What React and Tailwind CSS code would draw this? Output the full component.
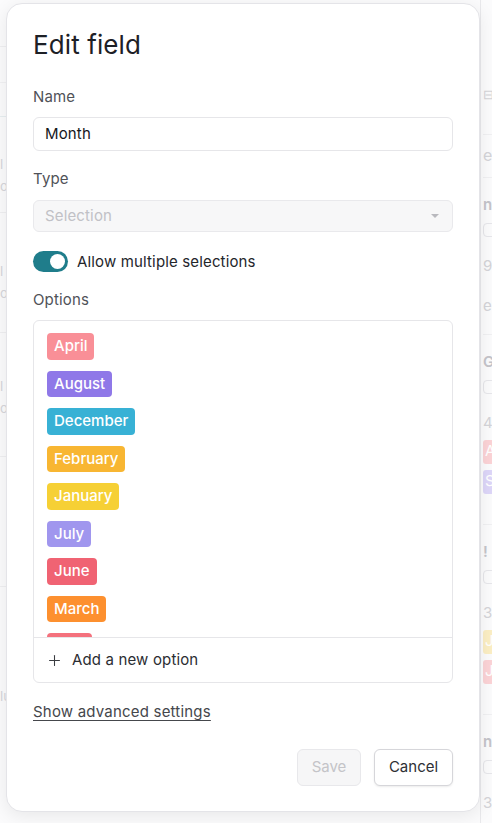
import { Plus } from "lucide-react";

const options = [
  { label: "April", color: "bg-[#f98f97]" },
  { label: "August", color: "bg-[#8f78e8]" },
  { label: "December", color: "bg-[#38b1d5]" },
  { label: "February", color: "bg-[#f8b632]" },
  { label: "January", color: "bg-[#f6d035]" },
  { label: "July", color: "bg-[#a096ee]" },
  { label: "June", color: "bg-[#f06373]" },
  { label: "March", color: "bg-[#fd902f]" },
  { label: "May", color: "bg-[#f4717d]" },
];

const cards = [
  { h: "h-[157px]", title: "nk", rows: ["90", "er"], badges: [] },
  {
    h: "h-[190px]",
    title: "Gro",
    rows: ["4,1"],
    badges: [
      { text: "Ap", cls: "bg-[#fbd3d6]" },
      { text: "Se", cls: "bg-[#ddd6f8]" },
    ],
  },
  {
    h: "h-[190px]",
    title: "! [",
    rows: ["3,5"],
    badges: [
      { text: "Ja", cls: "bg-[#fbeec4]" },
      { text: "Ju", cls: "bg-[#fbd3d6]" },
    ],
  },
  { h: "h-[120px]", title: "n", rows: ["32"], badges: [] },
];

// faded page behind the dialog
const Backdrop = () => (
  <div className="flex h-full w-full bg-[#fbfbfc]">
    <div className="flex w-[6px] flex-col overflow-hidden text-[13px] text-[#d6d6da]">
      <div className="h-[47px] border-b border-[#efeff1]" />
      <div className="h-[36px] border-b border-[#f1f1f3]" />
      <div className="h-[34px] border-b border-[#e7eef0]" />
      <div className="h-[96px] border-b border-[#efeff1] pt-[36px] leading-[22px]">l<br />o</div>
      <div className="h-[120px] border-b border-[#efeff1] pt-[47px] leading-[22px]">l<br />o</div>
      <div className="h-[124px] border-b border-[#efeff1] pt-[42px] leading-[22px]">l<br />o</div>
      <div className="h-[130px] border-b border-[#efeff1]" />
      <div className="pt-[100px]">lu</div>
    </div>
    <div className="ml-auto w-[12px] overflow-hidden border-l border-[#e9e9ec]">
      <div className="w-[200px] pl-[2px] text-[15px] text-[#d4d4d8]">
        <div className="h-[135px] border-b border-[#f0f0f2] pt-[85px] text-[13px]">⊟</div>
        <div className="h-[43px] border-b border-[#f0f0f2] pt-[8px] text-[16px]">e l</div>
        {cards.map((c, i) => (
          <div key={i} className={`${c.h} border-b border-[#f0f0f2] pt-[16px]`}>
            <div className="font-semibold text-[#c4c4ca]">{c.title}</div>
            <div className="mt-[6px] h-[14px] w-[40px] rounded-sm border border-[#e6e6ea]" />
            {c.rows.map((r) => (
              <div key={r} className="mt-[18px]">{r}</div>
            ))}
            {c.badges.map((b) => (
              <div key={b.text} className={`mt-[6px] h-[24px] w-[40px] rounded-[3px] px-[2px] text-white ${b.cls}`}>
                {b.text}
              </div>
            ))}
          </div>
        ))}
      </div>
    </div>
  </div>
);

export default function App() {
  return (
    <div className="relative h-[823px] w-[492px] overflow-hidden font-['Inter','Noto_Sans',sans-serif]">
      <Backdrop />

      <div className="absolute left-[6px] top-[3px] flex h-[809px] w-[474px] flex-col rounded-[16px] border border-[#e4e4e8] bg-white px-[26px] pb-[25px] pt-[25px] shadow-[0_4px_18px_rgba(0,0,0,0.08)]">
        <h1 className="text-[26px] font-normal leading-[32px] tracking-[0.1px] text-[#1d2026]">Edit field</h1>

        <label className="mt-[26px] text-[15px] leading-[20px] tracking-[0.15px] text-[#505258]">Name</label>
        <div className="mt-[10px] flex h-[34px] items-center rounded-[6px] border border-[#e6e6e9] px-[11px] text-[15px] tracking-[0.15px] text-[#16181c]">
          Month
        </div>

        <label className="mt-[18px] text-[15px] leading-[20px] tracking-[0.15px] text-[#505258]">Type</label>
        <div className="mt-[11px] flex h-[32px] items-center justify-between rounded-[6px] border border-[#e9e9ec] bg-[#f7f7f8] pl-[11px] pr-[13px] text-[15px] tracking-[0.15px] text-[#c1c1c6]">
          <span>Selection</span>
          <span className="h-0 w-0 border-x-[4px] border-t-[4px] border-x-transparent border-t-[#b9b9be]" />
        </div>

        <div className="mt-[19px] flex items-center gap-[9px]">
          <div className="flex h-[21px] w-[35px] items-center justify-end rounded-full bg-[#1f7d8b] pr-[3px]">
            <div className="h-[15px] w-[15px] rounded-full bg-white" />
          </div>
          <span className="text-[15px] leading-[20px] tracking-[0.15px] text-[#24262b]">Allow multiple selections</span>
        </div>

        <label className="mt-[18px] text-[15px] leading-[20px] tracking-[0.15px] text-[#505258]">Options</label>
        <div className="mt-[10px] flex h-[363px] flex-col rounded-[6px] border border-[#e6e6e9]">
          <div className="flex h-[317px] flex-col items-start gap-[11px] overflow-hidden border-b border-[#e6e6e9] pl-[13px] pt-[12px]">
            {options.map((o) => (
              <span
                key={o.label}
                className={`flex h-[26.5px] shrink-0 items-center rounded-[4px] px-[7px] text-[15px] font-medium text-white ${o.color}`}
              >
                {o.label}
              </span>
            ))}
          </div>
          <div className="flex flex-1 items-center gap-[9px] pl-[12px] text-[15px] tracking-[0.15px] text-[#2b2d32]">
            <Plus className="h-[17px] w-[17px] text-[#3a3c41]" strokeWidth={1.5} />
            <span>Add a new option</span>
          </div>
        </div>

        <a className="mt-[19px] self-start text-[15px] leading-[20px] tracking-[0.2px] text-[#45474c] underline underline-offset-[3px]">
          Show advanced settings
        </a>

        <div className="mt-auto flex justify-end gap-[13px]">
          <button className="h-[37px] w-[64px] rounded-[6px] border border-[#e8e8eb] bg-[#f6f6f7] text-[15px] text-[#c4c4c8]">
            Save
          </button>
          <button className="h-[37px] w-[79px] rounded-[6px] border border-[#d6d6da] bg-white text-[15px] text-[#2e3035] shadow-[0_1px_2px_rgba(0,0,0,0.08)]">
            Cancel
          </button>
        </div>
      </div>
    </div>
  );
}
